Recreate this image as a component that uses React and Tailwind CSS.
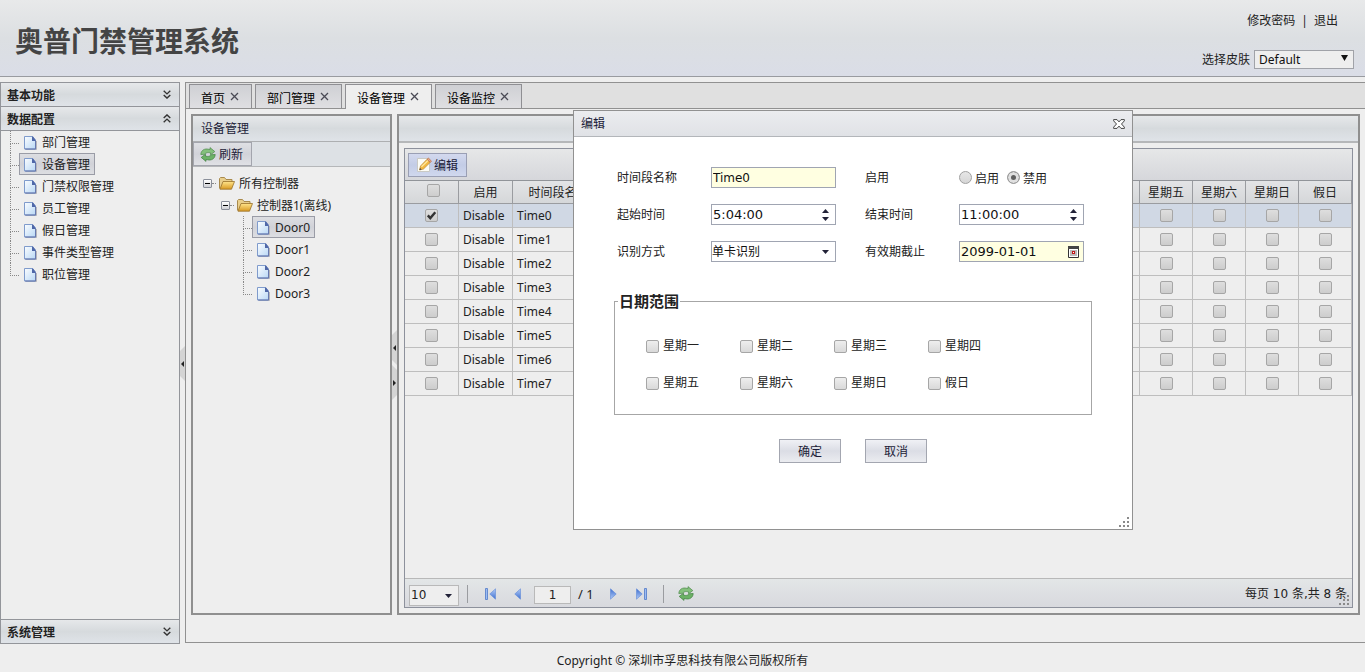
import React, { useState } from "react";

const barBg = "bg-linear-to-b from-[#e6e8ea] via-[#d6dadd] to-[#dfe3e8]";
const buttonBg = "bg-linear-to-b from-[#dfe0e4] via-[#d2d3d9] to-[#e0e1e5]";

function PageIcon() {
  return (
    <svg width="13" height="15" viewBox="0 0 13 15" className="shrink-0" aria-hidden="true">
      <defs>
        <linearGradient id="pageFill" x1="0" y1="0" x2="1" y2="1">
          <stop offset="0" stopColor="#fbfdff" />
          <stop offset="1" stopColor="#b9d8f5" />
        </linearGradient>
      </defs>
      <path d="M12.5 5v8.5H2" fill="none" stroke="#b5b5ba" />
      <path d="M.5 .5h8l3 3.500V13H.5z" fill="url(#pageFill)" stroke="#7f9bcc" />
      <path d="M8 .5h1l2.500 3.500V5H8z" fill="#5068a8" />
      <path d="M11.500 4.500V13H1" fill="none" stroke="#6679b0" />
    </svg>
  );
}

function FolderIcon() {
  return (
    <svg width="16" height="13" viewBox="0 0 16 13" className="shrink-0" aria-hidden="true">
      <defs>
        <linearGradient id="folderFill" x1="0" y1="0" x2="0" y2="1">
          <stop offset="0" stopColor="#ffe48c" />
          <stop offset="1" stopColor="#d99a22" />
        </linearGradient>
      </defs>
      <path d="M.5 11.500V1.500L1.500 .5h4l1.500 2h6v3" fill="#e9cf8c" stroke="#a98a4c" />
      <path d="M1 12.200l3-7.700h11.500L12.500 12.200z" fill="url(#folderFill)" stroke="#98702a" strokeWidth=".8" strokeLinejoin="round" />
    </svg>
  );
}

function RefreshIcon() {
  return (
    <svg width="16" height="15" viewBox="0 0 16 15" className="shrink-0" aria-hidden="true">
      <path
        d="M.8 7.500C1 4 3.500 1.800 7 2L10 2.500V.6l4.800 4-4.300 3.200V5.900C8 5.200 6 5.500 4.500 7.300z"
        fill="#84c07c"
        stroke="#4d8a4a"
        strokeWidth=".7"
        strokeLinejoin="round"
      />
      <path
        d="M15.200 7.500c-.2 3.500-2.700 5.700-6.200 5.500L6 12.500v1.900L1.200 10.400l4.300-3.200v1.900c2.500.7 4.500.4 6-1.400z"
        fill="#6cb266"
        stroke="#41803f"
        strokeWidth=".7"
        strokeLinejoin="round"
      />
    </svg>
  );
}

function EditIcon() {
  return (
    <svg width="16" height="16" viewBox="0 0 16 16" className="shrink-0" aria-hidden="true">
      <path d="M1.500 1.500h12v13h-12z" fill="#fcfcf6" stroke="#c9c9c4" />
      <path d="M3.500 13l1-4L11 2.300l3.300 3L7.500 12z" fill="#f3b83f" stroke="#b98534" strokeWidth=".7" />
      <path d="M5.500 9.800l6.800-6.600" stroke="#ffe9a0" strokeWidth="1.200" />
      <path d="M11 2.300l1.300-1.200 3.200 3-1.200 1.200z" fill="#e9a985" stroke="#b46040" strokeWidth=".6" />
      <path d="M3.500 13l.5-2 1.700 1.500z" fill="#444" />
    </svg>
  );
}

function Chevrons({ up }) {
  return (
    <svg width="8" height="9" viewBox="0 0 8 9" fill="none" stroke="#333" strokeWidth="1.400" aria-hidden="true">
      {up ? <path d="M.7 4L4 .9 7.300 4M.7 8.200L4 5.100l3.300 3.100" /> : <path d="M.7 .8L4 3.900 7.300 .8M.7 5L4 8.100 7.300 5" />}
    </svg>
  );
}

function Triangle({ dir = "down" }) {
  return (
    <svg width="7" height="4" viewBox="0 0 7 4" fill="#222238" className="block" aria-hidden="true">
      {dir === "up" ? <path d="M0 4L3.500 0 7 4z" /> : <path d="M0 0h7L3.500 4z" />}
    </svg>
  );
}

function PagerIcon({ kind }) {
  const forward = kind === "next" || kind === "last";
  const bar = kind === "first" || kind === "last";
  return (
    <svg
      width={bar ? 11 : 7}
      height="12"
      viewBox={bar ? "0 0 11 12" : "0 0 7 12"}
      className={forward ? "rotate-180" : ""}
      aria-hidden="true"
    >
      <defs>
        <linearGradient id="pagerFill" x1="0" y1="0" x2="0" y2="1">
          <stop offset="0" stopColor="#b3cdf8" />
          <stop offset="1" stopColor="#3f6fd0" />
        </linearGradient>
      </defs>
      {bar && <path d="M.5 .5h2v11h-2z" fill="#9cbcf2" stroke="#4f78c8" strokeWidth=".8" />}
      <path d={bar ? "M10.500 .8v10.400L4.800 6z" : "M6.500 .8v10.400L.8 6z"} fill="url(#pagerFill)" stroke="#5f8ad8" strokeWidth=".6" />
    </svg>
  );
}

function Grip() {
  return (
    <svg width="10" height="10" viewBox="0 0 10 10" fill="#8a8a8a" className="absolute right-[3px] bottom-[2px]" aria-hidden="true">
      <path d="M8 0h2v2H8zM4 4h2v2H4zM8 4h2v2H8zM0 8h2v2H0zM4 8h2v2H4zM8 8h2v2H8z" />
    </svg>
  );
}

function Check({ label, defaultChecked = false, light = false }) {
  return (
    <span className="relative inline-block h-[13px] w-[13px] align-top">
      <input
        type="checkbox"
        aria-label={label}
        defaultChecked={defaultChecked}
        className={
          "peer block h-[13px] w-[13px] appearance-none rounded-[2px] border border-[#a6a6a6] bg-linear-to-b " +
          (light ? "from-[#eeeeee] to-[#d9d9d9]" : "from-[#dedede] to-[#cdcdcd]")
        }
      />
      <svg
        viewBox="0 0 13 13"
        className="pointer-events-none absolute inset-0 hidden h-[13px] w-[13px] peer-checked:block"
        fill="none"
        stroke="#333"
        strokeWidth="2.400"
        aria-hidden="true"
      >
        <path d="M2.800 6.400l2.500 2.700 5-5.800" />
      </svg>
    </span>
  );
}

function Guide({ last }) {
  return (
    <span className="flex w-[9px] shrink-0 flex-col self-stretch" aria-hidden="true">
      <span className="h-[13px] border-b border-l border-dotted border-[#888]" />
      {!last && <span className="grow border-l border-dotted border-[#888]" />}
    </span>
  );
}

function Leaf({ label, selected, last }) {
  return (
    <li className="flex h-[22px]">
      <Guide last={last} />
      <a
        href="#"
        className={
          "flex items-center gap-[5px] border px-1 pt-[2px] leading-4 " +
          (selected ? "border-[#9a9ca6] bg-linear-to-b from-[#dddee2] via-[#d1d2d8] to-[#dddee2]" : "border-transparent")
        }
      >
        <PageIcon />
        {label}
      </a>
    </li>
  );
}

function Branch({ label }) {
  return (
    <div className="flex h-[22px] items-center">
      <button aria-label={"折叠 " + label} className="flex h-[9px] w-[9px] items-center justify-center rounded-[1px] border border-[#8a8f9a] bg-linear-to-b from-white to-[#cfd0d4]">
        <span className="h-px w-[5px] bg-black" />
      </button>
      <span className="w-1 border-b border-dotted border-[#888]" />
      <span className="ml-[3px]">
        <FolderIcon />
      </span>
      <span className="ml-1 pt-[2px]">{label}</span>
    </div>
  );
}

function AccordionHead({ label, open }) {
  return (
    <button className={"flex h-6 w-full shrink-0 items-center justify-between border-b border-[#93959a] pr-2 pl-[6px] font-bold text-[#222] " + barBg}>
      <span className="pt-[2px]">{label}</span>
      <Chevrons up={open} />
    </button>
  );
}

function Handle({ dir, label }) {
  return (
    <button aria-label={label} className="block h-[35px] w-[5px]">
      <svg width="5" height="35" viewBox="0 0 5 35" aria-hidden="true">
        {dir === "left" ? (
          <>
            <path d="M5 0v35L0 30V5z" fill="#d4d4d4" />
            <path d="M4 15v6L1 18z" fill="#222" />
          </>
        ) : (
          <>
            <path d="M0 0v35l5-5V5z" fill="#d4d4d4" />
            <path d="M1 15v6l3-3z" fill="#222" />
          </>
        )}
      </svg>
    </button>
  );
}

function Tab({ label, active }) {
  return (
    <div
      className={
        "flex items-center border border-[#8f8f93] pr-3 pl-[11px] text-black " +
        (active ? "-mb-px border-b-0 bg-[#eeeeee] pb-px" : "border-b-0 bg-linear-to-b from-[#cfd0d4] to-[#dfdfe2]")
      }
    >
      <button role="tab" aria-selected={Boolean(active)} className="pt-1">
        {label}
      </button>
      <button aria-label={"关闭 " + label} className="ml-[5px]">
        <svg width="9" height="9" viewBox="0 0 9 9" stroke="#4a4a55" strokeWidth="1.300" aria-hidden="true">
          <path d="M1 1l7 7M8 1L1 8" />
        </svg>
      </button>
    </div>
  );
}

const fieldBox = "flex h-[21px] w-[125px] items-center border border-[#a0a5b2] font-['DejaVu_Sans','Noto_Sans_CJK_SC',sans-serif] text-[#111]";

function TimeField({ id, value, strong }) {
  return (
    <div className={fieldBox + (strong ? " border-[#737b87]" : "") + " bg-white"}>
      <input id={id} defaultValue={value} className="w-0 grow bg-transparent pl-px text-[13px] outline-none" />
      <span className="mr-[6px] flex flex-col gap-1">
        <button aria-label="增加">
          <Triangle dir="up" />
        </button>
        <button aria-label="减少">
          <Triangle />
        </button>
      </span>
    </div>
  );
}

function EditDialog({ onClose }) {
  const days = ["星期一", "星期二", "星期三", "星期四", "星期五", "星期六", "星期日", "假日"];
  const radio =
    "h-[13px] w-[13px] appearance-none rounded-full border border-[#a0a0a0] bg-linear-to-b from-[#e6e6e6] to-[#d6d6d6] checked:bg-none checked:bg-[#606060] checked:shadow-[inset_0_0_0_3px_#e0e0e0]";
  const action = "h-6 w-[62px] border border-[#a3a6b0] bg-linear-to-b from-[#f0f1f5] via-[#dbdde5] to-[#ebecf0] pt-px text-[#1c1c38]";
  return (
    <div role="dialog" aria-label="编辑" className="absolute top-[110px] left-[573px] w-[560px] border border-[#919191] bg-white pb-[66px]">
      <div className="flex h-[26px] items-center justify-between border-b border-[#b3b6ba] bg-linear-to-b from-[#ebecef] to-[#e0e2e6] px-[7px] text-[#1c1c38]">
        <h2 className="pt-px">编辑</h2>
        <button aria-label="关闭" onClick={onClose}>
          <svg width="12" height="10" viewBox="0 0 12 10" fill="#fff" stroke="#444" strokeWidth="1" aria-hidden="true">
            <path d="M.6 .6h3.400L6 2.900 8 .6h3.400v1.200L8.500 5l2.900 3.200v1.200H8L6 7.100 4 9.400H.6V8.200L3.500 5 .6 1.800z" />
          </svg>
        </button>
      </div>
      <form onSubmit={(e) => e.preventDefault()} className="px-10 pt-[30px]">
        <div className="grid grid-cols-[94px_154px_94px_126px] items-center gap-y-4 pl-[3px]">
          <label htmlFor="slot">时间段名称</label>
          <div className={fieldBox + " bg-[#ffffe1]"}>
            <input id="slot" defaultValue="Time0" className="w-full bg-transparent pl-px text-xs outline-none" />
          </div>
          <span>启用</span>
          <div className="flex h-[21px] items-center">
            <input type="radio" name="state" id="on" className={radio} />
            <label htmlFor="on" className="ml-[3px] pt-[2px]">启用</label>
            <input type="radio" name="state" id="off" defaultChecked className={radio + " ml-2"} />
            <label htmlFor="off" className="ml-[3px] pt-[2px]">禁用</label>
          </div>
          <label htmlFor="start">起始时间</label>
          <TimeField id="start" value="5:04:00" />
          <label htmlFor="end">结束时间</label>
          <TimeField id="end" value="11:00:00" strong />
          <label htmlFor="mode">识别方式</label>
          <div className="relative w-[125px]">
            <select id="mode" className={fieldBox + " appearance-none bg-white text-xs leading-4"}>
              <option>单卡识别</option>
            </select>
            <span className="pointer-events-none absolute top-[9px] right-[7px]">
              <Triangle />
            </span>
          </div>
          <label htmlFor="until">有效期截止</label>
          <div className={fieldBox + " bg-[#ffffe1]"}>
            <input id="until" defaultValue="2099-01-01" className="w-0 grow bg-transparent pl-px text-[13px] outline-none" />
            <button aria-label="选择日期" className="mr-1">
              <svg width="11" height="12" viewBox="0 0 11 12" aria-hidden="true">
                <path d="M.5 .5h10v11H.5z" fill="#fff" stroke="#333" />
                <path d="M0 0h11v3H0z" fill="#444" />
                <path d="M2 4h7v6H2z" fill="#b9b9b9" />
                <path d="M4 5h3v3H4z" fill="#c01818" />
                <path d="M5 6h1v1H5z" fill="#fff" />
              </svg>
            </button>
          </div>
        </div>
        <fieldset className="mt-[29px] border border-[#a6a6a6] pt-[25px] pb-[21px]">
          <legend className="ml-[3px] px-px text-[15px] leading-5 font-bold">日期范围</legend>
          <div className="grid grid-cols-[94px_94px_94px_94px] gap-y-[17px] pl-[31px] leading-5">
            {days.map((d) => (
              <label key={d} className="flex items-center gap-1">
                <Check label={d} light />
                {d}
              </label>
            ))}
          </div>
        </fieldset>
        <div className="mt-6 flex justify-center gap-6">
          <button className={action}>确定</button>
          <button type="button" className={action} onClick={onClose}>取消</button>
        </div>
      </form>
      <Grip />
    </div>
  );
}

const dayColumns = ["星期五", "星期六", "星期日", "假日"];
const rows = ["Time0", "Time1", "Time2", "Time3", "Time4", "Time5", "Time6", "Time7"];

function ScheduleTable() {
  const head = "h-[23px] border-r border-b border-[#9a9ca0] bg-linear-to-b from-[#e3e4e6] to-[#d5d7d9] px-0 pt-[2px] pb-0 font-normal";
  const cell = "h-6 border-r border-b border-[#bebebe] p-0";
  return (
    <table className="w-full table-fixed border-separate border-spacing-0 leading-5">
      <colgroup>
        <col className="w-[54px]" />
        <col className="w-[54px]" />
        <col className="w-[92px]" />
        <col />
        {dayColumns.map((d) => (
          <col key={d} className="w-[53px]" />
        ))}
      </colgroup>
      <thead>
        <tr>
          <th className={head}>
            <span className="flex justify-center pb-[5px] pl-[3px]">
              <Check label="全选" />
            </span>
          </th>
          <th className={head}>启用</th>
          <th className={head}>时间段名称</th>
          <th className={head} />
          {dayColumns.map((d) => (
            <th key={d} className={head}>{d}</th>
          ))}
        </tr>
      </thead>
      <tbody>
        {rows.map((name, i) => (
          <tr key={name} className={i === 0 ? "bg-[#d0d8e4]" : ""}>
            <td className={cell}>
              <span className="flex justify-center">
                <Check label={"选择 " + name} defaultChecked={i === 0} />
              </span>
            </td>
            <td className={cell + " pl-1"}>Disable</td>
            <td className={cell + " pl-1"}>{name}</td>
            <td className={cell} />
            {dayColumns.map((d) => (
              <td key={d} className={cell}>
                <span className="flex justify-center">
                  <Check label={name + " " + d} />
                </span>
              </td>
            ))}
          </tr>
        ))}
      </tbody>
    </table>
  );
}

function Pager() {
  return (
    <div className="relative flex h-[29px] items-center border-t border-[#b8b8b8] bg-linear-to-b from-[#e3e6e7] to-[#d8d9de] pt-px pr-[5px] pl-1">
      <div className="relative mt-[3px]">
        <select aria-label="每页条数" className="block h-[21px] w-[50px] appearance-none border border-[#b9b9b9] bg-[#eeeeee] pl-px font-['DejaVu_Sans',sans-serif] text-xs">
          <option>10</option>
        </select>
        <span className="pointer-events-none absolute top-[9px] right-[7px]">
          <Triangle />
        </span>
      </div>
      <span className="ml-2 h-[18px] w-px bg-[#9a9ca0]" />
      <button aria-label="首页" className="ml-[17px]"><PagerIcon kind="first" /></button>
      <button aria-label="上一页" className="ml-[18px]"><PagerIcon kind="prev" /></button>
      <input aria-label="页码" defaultValue="1" className="mt-[2px] ml-[13px] h-[18px] w-[37px] border border-[#b9b9b9] bg-[#eeeeee] text-center font-['DejaVu_Sans',sans-serif] text-xs outline-none" />
      <span className="ml-[7px] w-8 pt-px text-[13px]">/ 1</span>
      <button aria-label="下一页"><PagerIcon kind="next" /></button>
      <button aria-label="末页" className="ml-[19px]"><PagerIcon kind="last" /></button>
      <span className="ml-4 h-[18px] w-px bg-[#9a9ca0]" />
      <button aria-label="刷新" className="ml-[14px]"><RefreshIcon /></button>
      <span className="ml-auto font-['DejaVu_Sans','Noto_Sans_CJK_SC',sans-serif]">每页 10 条,共 8 条</span>
      <Grip />
    </div>
  );
}

export default function App() {
  const [editing, setEditing] = useState(true);
  return (
    <div className="relative flex min-h-screen flex-col bg-[#eeeeee] font-['Noto_Sans','Noto_Sans_CJK_SC',sans-serif] text-xs leading-5 text-[#222]">
      <header className="flex h-[77px] items-start justify-between border-b border-[#999ba0] bg-linear-to-b from-[#e8e9ea] via-[#dcdfe2] to-[#dadde7] pr-[11px] pl-[15px]">
        <h1 className="pt-[21px] text-[28px] leading-10 font-bold text-[#444]">奥普门禁管理系统</h1>
        <div className="flex flex-col items-end gap-[18px] pt-[11px]">
          <nav className="flex gap-[6px] pr-4">
            <a href="#">修改密码</a>
            <span>|</span>
            <a href="#">退出</a>
          </nav>
          <div className="flex items-center gap-1">
            <label htmlFor="skin" className="pt-px">选择皮肤</label>
            <div className="relative">
              <select id="skin" className="block h-[19px] w-[100px] appearance-none border border-[#a0a2a8] bg-[#eeeeee] pl-1 text-xs leading-4 text-[#111]">
                <option>Default</option>
              </select>
              <svg width="7" height="6" viewBox="0 0 7 6" className="pointer-events-none absolute top-[5px] right-[6px]" aria-hidden="true">
                <path d="M0 0h7L3.500 6z" fill="#111" />
              </svg>
            </div>
          </div>
        </div>
      </header>

      <div className="flex grow pt-[5px]">
        <aside className="flex w-[180px] shrink-0 flex-col border border-b-0 border-[#93959a]">
          <AccordionHead label="基本功能" />
          <AccordionHead label="数据配置" open />
          <ul className="grow border-b border-[#93959a] pl-[9px]">
            <Leaf label="部门管理" />
            <Leaf label="设备管理" selected />
            <Leaf label="门禁权限管理" />
            <Leaf label="员工管理" />
            <Leaf label="假日管理" />
            <Leaf label="事件类型管理" />
            <Leaf label="职位管理" last />
          </ul>
          <AccordionHead label="系统管理" />
        </aside>
        <div className="flex w-[5px] shrink-0 flex-col justify-center">
          <Handle dir="left" label="收起菜单" />
        </div>

        <main className="mb-px flex grow flex-col border border-r-0 border-[#919191]">
          <div role="tablist" className="flex h-[26px] gap-[3px] border-b border-[#919191] bg-[#e0e0e0] pt-px pl-[3px]">
            <Tab label="首页" />
            <Tab label="部门管理" />
            <Tab label="设备管理" active />
            <Tab label="设备监控" />
          </div>
          <div className="flex grow px-[5px] pt-[5px] pb-[27px]">
            <section className="w-[201px] shrink-0 border-2 border-[#8f8f8f]">
              <h2 className={"h-[26px] border-b border-[#adafb1] pl-2 leading-[26px] text-[#1c1c38] " + barBg}>设备管理</h2>
              <div className="border-b border-[#b5b7b9] bg-[#dde1e5]">
                <button className={"flex h-6 w-[59px] items-center gap-[3px] border border-[#a3a5ad] pl-[6px] text-[#1c1c38] " + buttonBg}>
                  <RefreshIcon />
                  <span className="pt-[2px]">刷新</span>
                </button>
              </div>
              <div className="pt-[5px] pl-[10px]">
                <Branch label="所有控制器" />
                <div className="pl-[18px]">
                  <Branch label="控制器1(离线)" />
                  <ul className="pl-[22px]">
                    <Leaf label="Door0" selected />
                    <Leaf label="Door1" />
                    <Leaf label="Door2" />
                    <Leaf label="Door3" last />
                  </ul>
                </div>
              </div>
            </section>
            <div className="flex w-[5px] shrink-0 flex-col justify-center">
              <Handle dir="left" label="收起左侧" />
              <Handle dir="right" label="收起右侧" />
            </div>
            <section className="flex grow flex-col border-2 border-[#8f8f8f]">
              <div className={"h-[27px] border-b-2 border-[#b5b7b9] " + barBg} />
              <div className="m-[5px] flex grow flex-col border border-[#8d919c]">
                <div className="flex h-8 items-center border-b border-[#919499] bg-linear-to-b from-[#e6e7e8] to-[#d6d7db] pl-[3px]">
                  <button
                    onClick={() => setEditing(true)}
                    className="flex h-6 w-[59px] items-center gap-[2px] border border-[#9a9fb4] bg-linear-to-b from-[#d3d9ee] via-[#c3cce6] to-[#d0d8ee] pl-[7px] text-[#1c1c38]"
                  >
                    <EditIcon />
                    <span className="pt-[2px]">编辑</span>
                  </button>
                </div>
                <div className="grow">
                  <ScheduleTable />
                </div>
                <Pager />
              </div>
            </section>
          </div>
        </main>
      </div>

      <footer className="flex h-7 items-center justify-center pt-[6px]">Copyright © 深圳市孚思科技有限公司版权所有</footer>

      {editing && <EditDialog onClose={() => setEditing(false)} />}
    </div>
  );
}
